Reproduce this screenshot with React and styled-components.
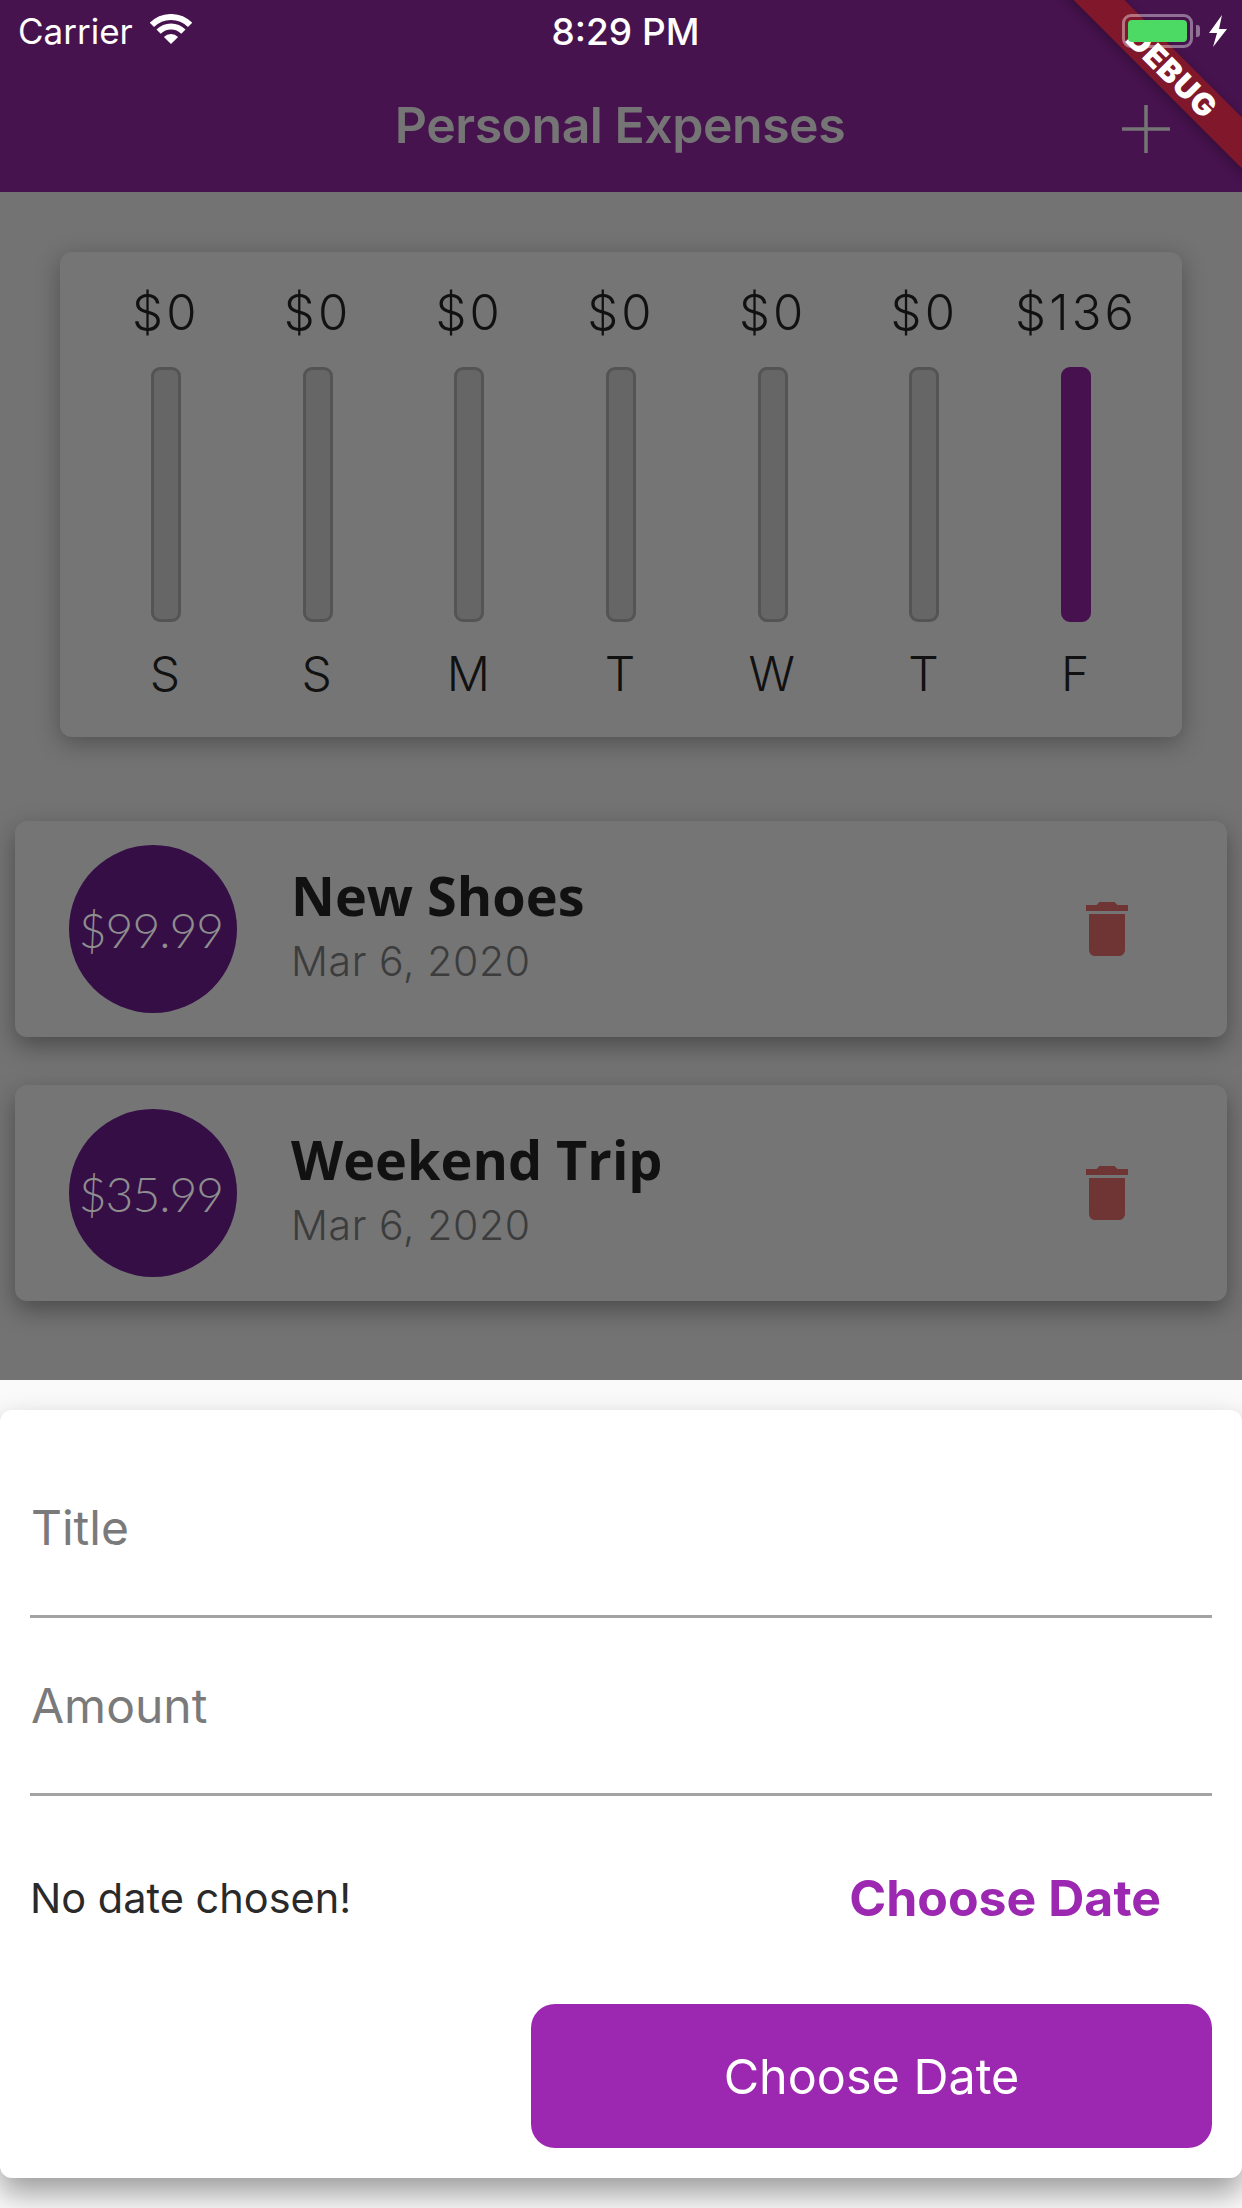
import React from "react";
import styled, { createGlobalStyle } from "styled-components";

const GlobalStyle = createGlobalStyle`
  html, body {
    margin: 0;
    padding: 0;
    background: #fafafa;
  }
  * {
    box-sizing: border-box;
  }
`;

const days = [
  { label: "S", amount: "$0" },
  { label: "S", amount: "$0" },
  { label: "M", amount: "$0" },
  { label: "T", amount: "$0" },
  { label: "W", amount: "$0" },
  { label: "T", amount: "$0" },
  { label: "F", amount: "$136", filled: true },
];

const expenses = [
  { title: "New Shoes", price: "$99.99", date: "Mar 6, 2020" },
  { title: "Weekend Trip", price: "$35.99", date: "Mar 6, 2020" },
];

const App = () => {
  return (
    <Page>
      <GlobalStyle />
      <Header>
        <StatusBar>
          <Carrier>
            Carrier
            <svg width="42" height="30" viewBox="0 0 42 30">
              <path d="M1.9 10.9A27 27 0 0 1 40.1 10.9" fill="none" stroke="#fff" strokeWidth="6" />
              <path d="M8.6 17.6A17.5 17.5 0 0 1 33.4 17.6" fill="none" stroke="#fff" strokeWidth="6" />
              <path d="M21 30L13.9 22.9A10 10 0 0 1 28.1 22.9Z" fill="#fff" />
            </svg>
          </Carrier>
          <Clock>8:29 PM</Clock>
          <BatteryGroup>
            <Battery>
              <BatteryFill />
            </Battery>
            <BatteryNub />
            <svg width="18" height="32" viewBox="0 0 18 32">
              <path d="M13 0L0 18H8L4 32L18 14H10Z" fill="#fff" />
            </svg>
          </BatteryGroup>
        </StatusBar>
        <AppBar>
          <AppTitle>Personal Expenses</AppTitle>
          <AddIcon width="48" height="48" viewBox="0 0 48 48">
            <path d="M24 0V48M0 24H48" stroke="#757575" strokeWidth="3.5" />
          </AddIcon>
        </AppBar>
        <DebugRibbon>DEBUG</DebugRibbon>
      </Header>

      <Main>
        <ChartCard>
          {days.map((day, i) => (
            <ChartColumn key={i}>
              <ChartAmount>{day.amount}</ChartAmount>
              <Bar $filled={day.filled} />
              <DayLabel>{day.label}</DayLabel>
            </ChartColumn>
          ))}
        </ChartCard>

        <ExpenseList>
          {expenses.map((item) => (
            <ExpenseCard key={item.title}>
              <PriceCircle>{item.price}</PriceCircle>
              <ExpenseInfo>
                <ExpenseTitle>{item.title}</ExpenseTitle>
                <ExpenseDate>{item.date}</ExpenseDate>
              </ExpenseInfo>
              <TrashIcon width="72" height="72" viewBox="0 0 24 24">
                <path
                  d="M6 19c0 1.1.9 2 2 2h8c1.1 0 2-.9 2-2V7H6v12zM19 4h-3.5l-1-1h-5l-1 1H5v2h14V4z"
                  fill="#6f3535"
                />
              </TrashIcon>
            </ExpenseCard>
          ))}
        </ExpenseList>
      </Main>

      <SheetArea>
        <Sheet>
          <Field>
            <FieldLabel>Title</FieldLabel>
          </Field>
          <Field>
            <FieldLabel>Amount</FieldLabel>
          </Field>
          <DateRow>
            <NoDate>No date chosen!</NoDate>
            <ChooseLink>Choose Date</ChooseLink>
          </DateRow>
          <SubmitRow>
            <SubmitButton>Choose Date</SubmitButton>
          </SubmitRow>
        </Sheet>
      </SheetArea>
    </Page>
  );
};

const Page = styled.div`
  width: 1242px;
  height: 2208px;
  display: flex;
  flex-direction: column;
  overflow: hidden;
  font-family: Inter, "Liberation Sans", sans-serif;
`;

const Header = styled.header`
  position: relative;
  height: 192px;
  flex-shrink: 0;
  background: #47134f;
  overflow: hidden;
`;

const StatusBar = styled.div`
  height: 60px;
  padding: 2px 15px 0 18px;
  display: grid;
  grid-template-columns: 1fr auto 1fr;
  align-items: center;
  color: #fff;
  position: relative;
  z-index: 2;
`;

const Carrier = styled.div`
  display: flex;
  align-items: center;
  gap: 17px;
  font-size: 35px;
  svg {
    margin-top: -4px;
  }
`;

const Clock = styled.div`
  font-size: 37px;
  font-weight: 500;
  margin-left: 6px;
`;

const BatteryGroup = styled.div`
  display: flex;
  align-items: center;
  justify-content: flex-end;
  svg {
    margin-left: 9px;
  }
`;

const Battery = styled.div`
  width: 71px;
  height: 34px;
  padding: 3px;
  border: 3px solid rgba(255, 255, 255, 0.4);
  border-radius: 9px;
`;

const BatteryFill = styled.div`
  width: 100%;
  height: 100%;
  background: #4cd964;
  border-radius: 4px;
`;

const BatteryNub = styled.div`
  width: 4px;
  height: 12px;
  margin-left: 3px;
  background: rgba(255, 255, 255, 0.4);
  border-radius: 0 3px 3px 0;
`;

const AppBar = styled.div`
  position: relative;
  height: 132px;
  display: flex;
  align-items: center;
  justify-content: center;
  padding-bottom: 2px;
`;

const AppTitle = styled.h1`
  margin: 0 0 0 -2px;
  font-size: 50px;
  font-weight: 600;
  letter-spacing: -0.5px;
  color: #757575;
`;

const AddIcon = styled.svg`
  position: absolute;
  left: 1122px;
  top: 45px;
`;

const DebugRibbon = styled.div`
  position: absolute;
  left: 977px;
  top: 60px;
  width: 400px;
  height: 36px;
  padding-right: 14px;
  transform: rotate(45deg);
  background: #80172a;
  box-shadow: 0 3px 12px rgba(0, 0, 0, 0.3);
  color: #fff;
  font-size: 31px;
  font-weight: 900;
  line-height: 36px;
  letter-spacing: 1px;
  text-align: center;
  z-index: 1;
`;

const Main = styled.main`
  height: 1188px;
  flex-shrink: 0;
  background: #737373;
  padding: 60px 15px 0;
`;

const ChartCard = styled.section`
  height: 485px;
  margin: 0 45px;
  padding: 0 30px;
  display: grid;
  grid-template-columns: repeat(7, 1fr);
  background: #757575;
  border-radius: 12px;
  box-shadow: 0 6px 24px rgba(0, 0, 0, 0.3);
`;

const ChartColumn = styled.div`
  display: flex;
  flex-direction: column;
  align-items: center;
  padding-top: 32px;
`;

const ChartAmount = styled.div`
  height: 58px;
  font-size: 49px;
  font-weight: 300;
  line-height: 58px;
  letter-spacing: 3.2px;
  color: #111;
  white-space: nowrap;
`;

const Bar = styled.div`
  width: 30px;
  height: 255px;
  margin-top: 25px;
  background: ${(p) => (p.$filled ? "#47114f" : "#666666")};
  border: 3px solid ${(p) => (p.$filled ? "#47114f" : "#545454")};
  border-radius: 9px;
`;

const DayLabel = styled.div`
  height: 58px;
  margin-top: 23px;
  margin-right: 2px;
  font-size: 48px;
  font-weight: 300;
  line-height: 58px;
  color: #111;
`;

const ExpenseList = styled.section`
  margin-top: 84px;
  display: flex;
  flex-direction: column;
  gap: 48px;
`;

const ExpenseCard = styled.article`
  height: 216px;
  padding: 0 84px 0 54px;
  display: flex;
  align-items: center;
  background: #757575;
  border-radius: 12px;
  box-shadow: 0 9px 24px rgba(0, 0, 0, 0.35);
`;

const PriceCircle = styled.div`
  width: 168px;
  height: 168px;
  flex-shrink: 0;
  padding-right: 4px;
  border-radius: 50%;
  display: flex;
  align-items: center;
  justify-content: center;
  background: #350e46;
  color: #8e8e8e;
  font-family: Lato, sans-serif;
  font-weight: 300;
  font-size: 48px;
  letter-spacing: -1px;
`;

const ExpenseInfo = styled.div`
  flex: 1;
  margin-left: 54px;
  margin-top: -8px;
  display: flex;
  flex-direction: column;
  gap: 10px;
`;

const ExpenseTitle = styled.div`
  font-family: "Open Sans", sans-serif;
  font-weight: 700;
  font-size: 54px;
  line-height: 62px;
  color: #111;
`;

const ExpenseDate = styled.div`
  font-size: 41px;
  font-weight: 300;
  line-height: 50px;
  letter-spacing: 0.6px;
  color: #3c3c3c;
`;

const TrashIcon = styled.svg`
  flex-shrink: 0;
`;

const SheetArea = styled.div`
  flex: 1;
  background: #fafafa;
  padding-top: 30px;
`;

const Sheet = styled.section`
  height: 768px;
  padding: 0 30px;
  display: flex;
  flex-direction: column;
  background: #fff;
  border-radius: 12px;
  box-shadow: 0 15px 30px rgba(0, 0, 0, 0.38);
`;

const Field = styled.div`
  height: 178px;
  display: flex;
  align-items: flex-end;
  padding-bottom: 58px;
  border-bottom: 3px solid #a3a3a3;
  &:first-child {
    height: 208px;
  }
`;

const FieldLabel = styled.span`
  font-size: 48px;
  line-height: 58px;
  color: #7a7a7a;
  margin-left: 1px;
`;

const DateRow = styled.div`
  height: 204px;
  display: flex;
  align-items: center;
  justify-content: space-between;
  padding: 0 51px 0 0;
`;

const NoDate = styled.span`
  font-size: 41.5px;
  color: #2a2a2a;
`;

const ChooseLink = styled.span`
  font-size: 50px;
  font-weight: 700;
  color: #9c27b0;
`;

const SubmitRow = styled.div`
  margin-top: 4px;
  display: flex;
  justify-content: flex-end;
`;

const SubmitButton = styled.button`
  width: 681px;
  height: 144px;
  border: 0;
  border-radius: 24px;
  background: #9c27b0;
  color: #fff;
  font-family: inherit;
  font-size: 48.5px;
`;

export default App;
